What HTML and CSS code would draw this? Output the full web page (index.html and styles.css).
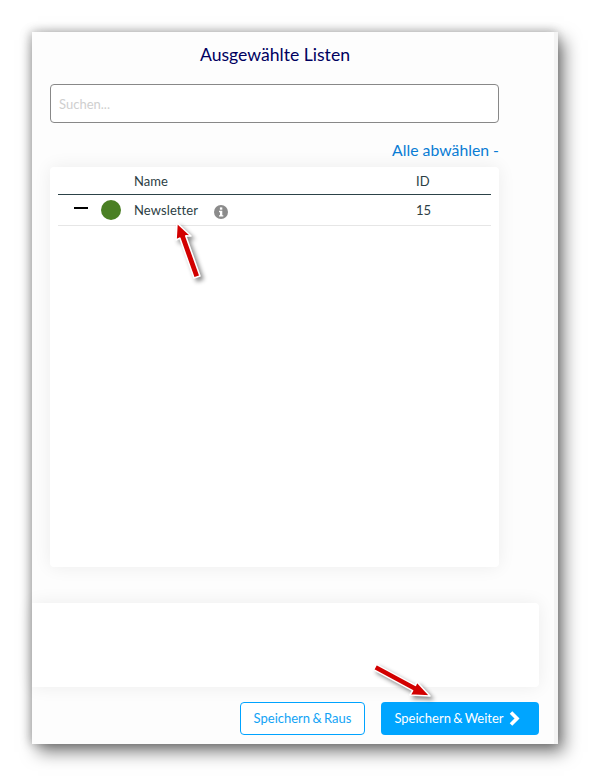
FILE: index.html
```html
<!DOCTYPE html>
<html lang="en">
<head>
    <meta charset="UTF-8">
    <title>Ausgewählte Listen</title>
    <link rel="stylesheet" href="styles.css">
</head>
<body>
    <div class="window">
        <h2 class="title">Ausgewählte Listen</h2>
        <div class="search-box">Suchen...</div>
        <div class="deselect"><a class="deselect-link">Alle abwählen -</a></div>
        <div class="list-card">
            <div class="list-row list-head">
                <span></span>
                <span></span>
                <span>Name</span>
                <span>ID</span>
            </div>
            <div class="list-row list-item">
                <span class="minus"></span>
                <span class="dot"></span>
                <span class="item-name">
                    Newsletter
                    <svg class="info" viewBox="0 0 14 14" width="14" height="14">
                        <circle cx="7" cy="7" r="7" fill="#8b8b8b"/>
                        <rect x="5.9" y="2.4" width="2.4" height="2.3" fill="#fff"/>
                        <path d="M5 5.8h3.3v4.4h1v1.4H5v-1.4h1V7.2H5z" fill="#fff"/>
                    </svg>
                </span>
                <span>15</span>
            </div>
        </div>
        <div class="empty-panel"></div>
        <div class="actions">
            <button type="button" class="btn btn-outline"><span class="btn-label">Speichern &amp; Raus</span></button>
            <button type="button" class="btn btn-primary">
                <span class="btn-label">Speichern &amp; Weiter</span>
                <svg viewBox="0 0 12 15" width="12" height="15">
                    <path d="M3 1.5L9 7.5L3 13.5" fill="none" stroke="#fff" stroke-width="3.6"/>
                </svg>
            </button>
        </div>
        <!-- red annotation arrows, drawn over the page -->
        <svg class="arrow arrow-name" viewBox="0 0 44 70" width="44" height="70">
            <path d="M12 8L11 25L14.8 23.1L29 63.1L35 60.9L20.8 20.9L26 21Z" fill="#d20000" stroke="#fff" stroke-width="1.6" stroke-linejoin="round"/>
        </svg>
        <svg class="arrow arrow-next" viewBox="0 0 74 50" width="74" height="50">
            <path d="M65 41L52 27L50.4 30.35L11.4 9.35L8.6 14.65L47.6 35.65L45 40Z" fill="#d20000" stroke="#fff" stroke-width="1.6" stroke-linejoin="round"/>
        </svg>
    </div>
</body>
</html>
```

FILE: styles.css
```css
body {
    margin: 0;
    padding: 32px;
    background-color: #fff;
    font-family: 'Lato', sans-serif;
    color: #2c3e44;
}
.window {
    position: relative;
    box-sizing: border-box;
    width: 526px;
    height: 712px;
    padding-top: 12px;
    background-color: #fdfdfd;
    border-right: 4px solid #f4f4f4;
    box-shadow: 6px 8px 16px rgba(0,0,0,0.5), -2px 0 10px rgba(0,0,0,0.22), 0 -2px 10px rgba(0,0,0,0.07);
}
.title {
    margin: 0;
    height: 22px;
    line-height: 22px;
    font-size: 17.6px;
    font-weight: 400;
    color: #00005f;
    text-align: center;
    width: 486px;
}
.search-box {
    box-sizing: border-box;
    width: 449px;
    height: 39px;
    margin: 18px 0 0 18px;
    padding-left: 8px;
    line-height: 38px;
    font-size: 13px;
    color: #cfcfcf;
    background: #fff;
    border: 1px solid #888;
    border-radius: 4px;
}
.deselect {
    width: 449px;
    margin: 18px 0 0 18px;
    height: 18px;
    line-height: 18px;
    text-align: right;
}
.deselect-link {
    font-size: 15.8px;
    color: #0a7cd4;
}
.list-card {
    box-sizing: border-box;
    width: 449px;
    height: 400px;
    margin: 8px 0 0 18px;
    padding: 0 8px;
    background: #fff;
    border-radius: 4px;
    box-shadow: 0 0 18px rgba(0,0,0,0.07);
}
.list-row {
    display: grid;
    grid-template-columns: 43px 33px 282px 1fr;
    align-items: center;
    font-size: 13px;
    box-sizing: border-box;
}
.list-head {
    height: 28px;
    border-bottom: 1px solid #2c4248;
}
.list-item {
    height: 31px;
    border-bottom: 1px solid #e6e6e6;
}
.minus {
    width: 14px;
    height: 2px;
    margin: 0 0 4px 16px;
    background: #000;
}
.dot {
    width: 20px;
    height: 20px;
    border-radius: 50%;
    background: #4a7f24;
}
.item-name {
    display: flex;
    align-items: center;
    gap: 16px;
    margin-bottom: 1px;
    letter-spacing: 0.1px;
}
.info {
    margin-top: 4px;
}
.empty-panel {
    width: 507px;
    height: 84px;
    margin-top: 36px;
    background: #fff;
    border-radius: 0 4px 4px 0;
    box-shadow: 0 0 18px rgba(0,0,0,0.07);
}
.actions {
    display: flex;
    justify-content: flex-end;
    gap: 16px;
    width: 507px;
    margin-top: 15px;
}
.btn {
    box-sizing: border-box;
    height: 33px;
    padding: 0;
    border-radius: 4px;
    font-family: 'Lato', sans-serif;
    font-size: 13px;
    word-spacing: -1px;
}
.btn-outline {
    width: 125px;
    background: #fff;
    color: #12a3f5;
    border: 1px solid #00a3ff;
}
.btn-primary {
    display: flex;
    align-items: center;
    justify-content: center;
    gap: 4px;
    width: 158px;
    padding-right: 6px;
    background: #00a5ff;
    color: #fff;
    border: none;
}
.btn-label {
    display: block;
    margin-bottom: 2px;
}
.arrow {
    position: absolute;
    overflow: visible;
    filter: drop-shadow(3px 3px 2px rgba(0,0,0,0.45));
}
.arrow-name {
    left: 133px;
    top: 183px;
}
.arrow-next {
    left: 333px;
    top: 623px;
}
```
